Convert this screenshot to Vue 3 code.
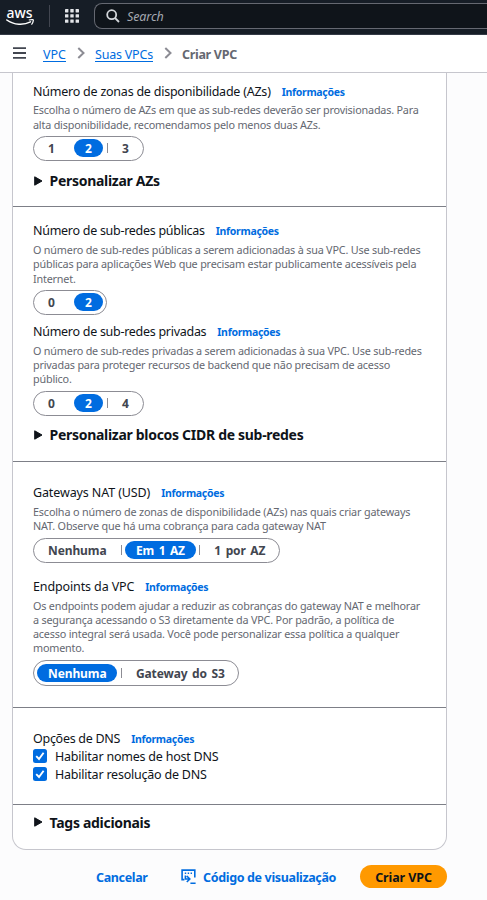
<script setup>
const sections = [
  {
    cls: 's1',
    fields: [
      { title: 'Número de zonas de disponibilidade (AZs)', lines: ['Escolha o número de AZs em que as sub-redes deverão ser provisionadas. Para', 'alta disponibilidade, recomendamos pelo menos duas AZs.'], options: ['1', '2', '3'], on: 1, cls: 'f1' },
    ],
    expand: 'Personalizar AZs',
  },
  {
    cls: 's2',
    fields: [
      { title: 'Número de sub-redes públicas', lines: ['O número de sub-redes públicas a serem adicionadas à sua VPC. Use sub-redes', 'públicas para aplicações Web que precisam estar publicamente acessíveis pela', 'Internet.'], options: ['0', '2'], on: 1, cls: 'f2' },
      { title: 'Número de sub-redes privadas', lines: ['O número de sub-redes privadas a serem adicionadas à sua VPC. Use sub-redes', 'privadas para proteger recursos de backend que não precisam de acesso', 'público.'], options: ['0', '2', '4'], on: 1, cls: 'f3' },
    ],
    expand: 'Personalizar blocos CIDR de sub-redes',
  },
  {
    cls: 's3',
    fields: [
      { title: 'Gateways NAT (USD)', lines: ['Escolha o número de zonas de disponibilidade (AZs) nas quais criar gateways', 'NAT. Observe que há uma cobrança para cada gateway NAT'], options: ['Nenhuma', 'Em 1 AZ', '1 por AZ'], on: 1, cls: 'f4' },
      { title: 'Endpoints da VPC', lines: ['Os endpoints podem ajudar a reduzir as cobranças do gateway NAT e melhorar', 'a segurança acessando o S3 diretamente da VPC. Por padrão, a política de', 'acesso integral será usada. Você pode personalizar essa política a qualquer', 'momento.'], options: ['Nenhuma', 'Gateway do S3'], on: 0, cls: 'f5' },
    ],
  },
]
const checks = ['Habilitar nomes de host DNS', 'Habilitar resolução de DNS']
</script>

<template>
  <div class="page">
    <nav class="top">
      <svg class="aws" width="30" height="30" viewBox="0 0 30 30">
        <text x="0.5" y="17.6" textLength="26" lengthAdjust="spacingAndGlyphs">aws</text>
        <path d="M.8 20C8 25.2 18 25.3 24.5 21.8" fill="none" stroke="#fff" stroke-width="1.5" stroke-linecap="round" />
        <path d="M22.8 20C26.4 19.2 27.7 19.4 27.3 20.7C27.1 22.2 26.5 23.5 25.5 24.6" fill="none" stroke="#fff" stroke-width="1.2" />
      </svg>
      <span class="bar"></span>
      <svg class="apps" width="14" height="14" viewBox="0 0 14 14" fill="#e3e5e9">
        <template v-for="r in 3" :key="r">
          <rect v-for="c in 3" :key="c" :x="(c - 1) * 5.3" :y="(r - 1) * 5.2" width="3.4" height="3.4" rx=".4" />
        </template>
      </svg>
      <div class="search">
        <svg width="14" height="14" viewBox="0 0 14 14" fill="none" stroke="#d3d6da" stroke-width="1.8">
          <circle cx="5.7" cy="5.7" r="4.5" /><path d="M9 9l4 4" />
        </svg>
        <i>Search</i>
      </div>
    </nav>
    <header class="crumbs">
      <svg class="menu" width="13" height="12" viewBox="0 0 13 12" stroke="#424650" stroke-width="1.8"><path d="M0 1.2h13M0 6h13M0 10.8h13" /></svg>
      <a class="c1">VPC</a>
      <svg class="chev" width="8" height="12" viewBox="0 0 8 12"><path d="M1.3 1L6.5 6L1.3 11" /></svg>
      <a class="c2">Suas VPCs</a>
      <svg class="chev" width="8" height="12" viewBox="0 0 8 12"><path d="M1.3 1L6.5 6L1.3 11" /></svg>
      <b>Criar VPC</b>
    </header>

    <main class="card">
      <section v-for="s in sections" :key="s.cls" :class="s.cls">
        <div v-for="f in s.fields" :key="f.title" class="field" :class="f.cls">
          <div class="label"><span>{{ f.title }}</span><a class="info">Informações</a></div>
          <p class="desc"><span v-for="l in f.lines" :key="l">{{ l }}</span></p>
          <div class="seg">
            <span v-for="(o, i) in f.options" :key="o" class="opt" :class="{ on: i === f.on, word: o.length > 1, sep: i > 0 && (f.on !== i || o.length > 1) }"><em>{{ o }}</em></span>
          </div>
        </div>
        <h3 v-if="s.expand" class="expand">
          <svg width="9" height="10" viewBox="0 0 9 10"><path d="M.7 .8L8 5L.7 9.2z" fill="#0f141a" stroke="#0f141a" stroke-linejoin="round" /></svg>{{ s.expand }}
        </h3>
      </section>
      <section class="s4">
        <div class="label"><span>Opções de DNS</span><a class="info">Informações</a></div>
        <div v-for="c in checks" :key="c" class="check">
          <svg width="14" height="14" viewBox="0 0 14 14"><rect width="14" height="14" rx="2.5" fill="#006ce0" /><path d="M3.2 7.2L6 10L10.6 3.8" fill="none" stroke="#fff" stroke-width="1.9" /></svg>
          <span>{{ c }}</span>
        </div>
      </section>
      <section class="s5">
        <h3 class="expand">
          <svg width="9" height="10" viewBox="0 0 9 10"><path d="M.7 .8L8 5L.7 9.2z" fill="#0f141a" stroke="#0f141a" stroke-linejoin="round" /></svg>Tags adicionais
        </h3>
      </section>
    </main>

    <footer class="actions">
      <a class="cancel">Cancelar</a>
      <a class="code">
        <svg width="16" height="16" viewBox="0 0 16 16" fill="none" stroke="#006ce0" stroke-width="1.6">
          <path d="M3.4 10.6H1.1V1.1H13.8V8.6" /><path d="M3.8 4.2h1.4M6.7 4.2h1.4M9.6 4.2h1.4" stroke-width="1.4" /><path d="M4.4 6.6V10H8M5.8 7L8.8 10L5.8 13M9.4 14.2H14.6" />
        </svg>
        <span>Código de visualização</span>
      </a>
      <button class="primary">Criar VPC</button>
    </footer>
  </div>
</template>

<style>
body { margin: 0; background: #fcfcfd; }
</style>
<style scoped>
.page { width: 487px; height: 900px; overflow: hidden; font-family: "Noto Sans", sans-serif; color: #0f141a; font-size: 12.5px; white-space: nowrap; }
.page * { box-sizing: border-box; }
.top { height: 35px; background: #161d26; border-bottom: 1px solid #343a46; display: flex; align-items: center; }
.aws { margin: 0 0 0 6px; align-self: flex-start; }
.aws text { fill: #fff; font-size: 15px; font-weight: 500; }
.bar { width: 1px; height: 22px; background: #424650; margin: 0 15px 2px 13px; }
.apps { margin-bottom: 3px; }
.search { flex: 1; margin: 0 0 2px 15px; height: 26px; border: 1px solid #656871; border-right: 0; border-radius: 8px 0 0 8px; background: #0f141a; display: flex; align-items: center; padding-left: 11px; gap: 7px; color: #a4a8b0; }
.search i { font-size: 12.5px; letter-spacing: -.1px; }
.crumbs { height: 38px; background: #fff; border-bottom: 1px solid #c6c6cd; display: flex; align-items: center; padding: 2px 0 0 13px; }
.menu { margin: 0 17px 4px 0; }
.crumbs a { color: #006ce0; border-bottom: 1px solid #006ce0; height: 15px; line-height: 15px; font-size: 12.5px; }
.crumbs .c2 { letter-spacing: -.2px; }
.crumbs b { color: #656871; font-weight: 700; letter-spacing: -.3px; }
.chev { margin: 0 10px 3px 11px; }
.c2 + .chev { margin-left: 11px; }
.chev path { fill: none; stroke: #8c8c94; stroke-width: 2; }
.card { width: 435px; height: 777px; margin-left: 12px; background: #fff; border: 1px solid #c6c6cd; border-top: 0; border-radius: 0 0 14px 14px; }
section { padding-left: 20px; border-bottom: 1px solid #7d7f87; }
.s1 { height: 134px; padding-top: 8px; }
.s2 { height: 255px; padding-top: 13px; }
.s3 { height: 246px; padding-top: 20px; }
.s4 { height: 97px; padding-top: 21px; }
.s5 { border: 0; padding-top: 7px; }
.label { display: flex; align-items: center; height: 20px; letter-spacing: -.23px; }
.s2 .label { letter-spacing: -.28px; }
.s3 .label { letter-spacing: -.12px; }
.s4 .label { height: 18px; letter-spacing: -.28px; }
.label .info { font-size: 10.5px; font-weight: 700; color: #006ce0; margin: 1px 0 0 11px; letter-spacing: -.3px; }
.desc { margin: 2px 0 4px; font-size: 10.8px; line-height: 14.3px; color: #656871; letter-spacing: -.19px; }
.f1 .desc { margin: 2.4px 0 3.6px; }
.f2 .desc, .f4 .desc { margin-top: 3px; }
.f4 .desc { letter-spacing: -.16px; }
.desc span { display: block; }
.seg { display: inline-flex; align-items: center; height: 25px; border: 1px solid #8c8c94; border-radius: 13px; padding: 0 3px; vertical-align: top; }
.f5 .seg { height: 26px; }
.opt { height: 18px; display: flex; color: #424650; font-size: 12px; font-weight: 700; letter-spacing: -.1px; word-spacing: 1.5px; }
.opt em { font-style: normal; line-height: 20px; height: 18px; padding: 0 10.7px 0 11px; border-radius: 9px; }
.word em { line-height: 19px; }
.opt:not(.word) em { width: 29px; text-align: center; padding: 0; }
.opt + .opt { margin-left: 8px; }
.opt.word + .opt { margin-left: 7.7px; }
.on em { background: #006ce0; color: #fff; }
.sep { position: relative; }
.sep::before { content: ""; position: absolute; left: -4px; top: 4px; height: 10px; width: 1px; background: #8c8c94; }
.f3 { margin-top: 7px; }
.f5 { margin-top: 14px; }
.expand { margin: 10px 0 0; display: flex; align-items: center; height: 20px; font-size: 14px; font-weight: 700; letter-spacing: -.3px; }
.s2 .expand { margin-top: 9px; }
.expand svg { margin: 0 6.6px 0 1px; }
.s5 .expand { margin-top: 0; }
.check { display: flex; align-items: center; height: 18px; gap: 8px; letter-spacing: -.22px; }
.check svg { margin-bottom: 1px; }
.actions { display: flex; align-items: center; height: 24px; margin-top: 15px; font-size: 12.5px; font-weight: 700; color: #006ce0; letter-spacing: -.35px; }
.cancel { margin-left: 96px; }
.code { display: flex; align-items: center; gap: 6.5px; margin-left: 33px; }
.code svg { margin-bottom: 1px; }
.primary { margin: 0 40px 1px auto; width: 87px; height: 23px; border: 0; border-radius: 12px; background: #ff9900; color: #0f141a; font: inherit; letter-spacing: -.1px; padding: 1px 0 0; }
</style>
